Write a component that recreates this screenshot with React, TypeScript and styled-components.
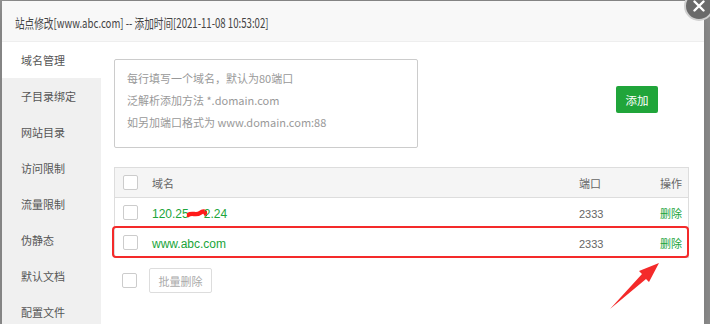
import React from 'react';
import styled, { createGlobalStyle } from 'styled-components';

const GlobalStyle = createGlobalStyle`
  html, body {
    margin: 0;
    padding: 0;
    background: #999;
    overflow: hidden;
  }
  body {
    font-family: "Noto Sans CJK SC", "Liberation Sans", sans-serif;
  }
`;

const Page = styled.div`
  height: 324px;
  padding: 1px 6px 0 2px;
  box-sizing: border-box;
  overflow: hidden;
`;

const Dialog = styled.div`
  position: relative;
  background: #fff;
  height: 340px;
  box-shadow: 1px 1px 30px rgba(0, 0, 0, 0.3);
`;

const TitleBar = styled.div`
  height: 40px;
  line-height: 40px;
  padding-left: 13px;
  background: #f8f8f8;
  border-bottom: 1px solid #eee;
  white-space: nowrap;
`;

const TitleText = styled.span`
  display: inline-block;
  font-size: 13px;
  color: #444;
  transform: scaleX(0.74);
  transform-origin: left center;
`;

const CloseButton = styled.div`
  position: absolute;
  top: -10px;
  right: -10px;
  width: 26px;
  height: 26px;
  border-radius: 50%;
  background: #6a6a6a;
  border: 2px solid #d0d0d0;
  display: flex;
  align-items: center;
  justify-content: center;
`;

const Body = styled.div`
  display: flex;
  height: 300px;
`;

const Sidebar = styled.ul`
  list-style: none;
  margin: 0;
  padding: 0;
  width: 99px;
  background: #f0f0f0;
`;

const NavItem = styled.li<{ active?: boolean }>`
  height: 36px;
  line-height: 36px;
  padding-left: 19px;
  font-size: 11px;
  color: #555;
  background: ${p => (p.active ? '#fff' : 'transparent')};
`;

const Content = styled.div`
  flex: 1;
  padding: 17px 15px 0 13px;
`;

const AddRow = styled.div`
  display: flex;
  align-items: flex-start;
`;

const DomainInput = styled.div`
  width: 304px;
  height: 89px;
  box-sizing: border-box;
  border: 1px solid #ccc;
  border-radius: 2px;
  padding: 7px 12px;
  font-size: 11px;
  line-height: 22px;
  color: #999;
`;

const AddButton = styled.button`
  margin: 27px 0 0 198px;
  width: 42px;
  height: 27px;
  border: none;
  border-radius: 2px;
  background: #20a53a;
  color: #fff;
  font-family: inherit;
  font-size: 11.5px;
  padding: 0;
`;

const TableWrap = styled.div`
  position: relative;
  margin-top: 19px;
`;

const Table = styled.table`
  width: 100%;
  table-layout: fixed;
  border-collapse: collapse;
  border: 1px solid #ddd;
  font-size: 11px;
`;

const HeadRow = styled.tr`
  background: #f5f5f5;
  height: 30px;
  color: #666;
`;

const Row = styled.tr`
  height: 30px;
  border-top: 1px solid #ddd;
`;

const Cell = styled.td<{ align?: 'left' | 'right'; w?: number }>`
  padding: 0;
  text-align: ${p => p.align || 'left'};
  width: ${p => (p.w ? `${p.w}px` : 'auto')};
  vertical-align: middle;
`;

const Check = styled.span`
  display: block;
  width: 13px;
  height: 13px;
  margin-left: 8px;
  border: 1px solid #ccc;
  border-radius: 2px;
  background: #fff;
`;

const Domain = styled.span`
  color: #20a53a;
  font-size: 12px;
  font-family: "Liberation Sans", "Noto Sans CJK SC", sans-serif;
`;

const Port = styled.span`
  color: #666;
  font-family: "Liberation Sans", sans-serif;
`;

const Action = styled.a`
  color: #20a53a;
  padding-right: 6px;
`;

const Mask = styled.svg`
  display: inline-block;
  vertical-align: middle;
  margin: 0 -3px 0 -2px;
`;

const Highlight = styled.div`
  position: absolute;
  left: -2px;
  right: 0;
  top: 59px;
  height: 28px;
  border: 2px solid #f42a2a;
  border-radius: 4px;
  pointer-events: none;
`;

const Footer = styled.div`
  display: flex;
  align-items: center;
  gap: 12px;
  margin-top: 10px;
`;

const BatchButton = styled.button`
  height: 25px;
  width: 63px;
  padding: 0;
  border: 1px solid #ddd;
  border-radius: 2px;
  background: #fff;
  color: #aaa;
  font-family: inherit;
  font-size: 11px;
`;

const Arrow = styled.svg`
  position: absolute;
  left: 598px;
  top: 257px;
`;

const navs = ['域名管理', '子目录绑定', '网站目录', '访问限制', '流量限制', '伪静态', '默认文档', '配置文件'];

export default function App() {
  return (
    <>
      <GlobalStyle />
      <Page>
        <Dialog>
          <TitleBar>
            <TitleText>站点修改[www.abc.com] -- 添加时间[2021-11-08 10:53:02]</TitleText>
          </TitleBar>
          <CloseButton>
            <svg width="12" height="12" viewBox="0 0 12 12">
              <path d="M1.5 1.5 L10.5 10.5 M10.5 1.5 L1.5 10.5" stroke="#fff" strokeWidth="2.4" strokeLinecap="round" />
            </svg>
          </CloseButton>
          <Body>
            <Sidebar>
              {navs.map((n, i) => (
                <NavItem key={n} active={i === 0}>{n}</NavItem>
              ))}
            </Sidebar>
            <Content>
              <AddRow>
                <DomainInput>
                  每行填写一个域名，默认为80端口<br />
                  泛解析添加方法 *.domain.com<br />
                  如另加端口格式为 www.domain.com:88
                </DomainInput>
                <AddButton>添加</AddButton>
              </AddRow>
              <TableWrap>
                <Table>
                  <tbody>
                    <HeadRow>
                      <Cell w={37}><Check /></Cell>
                      <Cell>域名</Cell>
                      <Cell w={50}>端口</Cell>
                      <Cell align="right" w={59}><span style={{ paddingRight: 6 }}>操作</span></Cell>
                    </HeadRow>
                    <Row>
                      <Cell><Check /></Cell>
                      <Cell>
                        <Domain>
                          120.25
                          <Mask width="20" height="10" viewBox="0 0 20 10">
                            <path d="M1 6 C5 3, 9 7, 13 4 S18 3, 19 5" stroke="#ff1a1a" strokeWidth="4.5" fill="none" strokeLinecap="round" />
                          </Mask>
                          2.24
                        </Domain>
                      </Cell>
                      <Cell><Port>2333</Port></Cell>
                      <Cell align="right"><Action>删除</Action></Cell>
                    </Row>
                    <Row>
                      <Cell><Check /></Cell>
                      <Cell><Domain>www.abc.com</Domain></Cell>
                      <Cell><Port>2333</Port></Cell>
                      <Cell align="right"><Action>删除</Action></Cell>
                    </Row>
                  </tbody>
                </Table>
                <Highlight />
              </TableWrap>
              <Footer>
                <Check />
                <BatchButton>批量删除</BatchButton>
              </Footer>
            </Content>
          </Body>
          <Arrow width="66" height="56" viewBox="0 0 66 56">
            <polygon points="59,5 49,24 46,21 10,51 42,16 39,13" fill="#f42a2a" />
          </Arrow>
        </Dialog>
      </Page>
    </>
  );
}
